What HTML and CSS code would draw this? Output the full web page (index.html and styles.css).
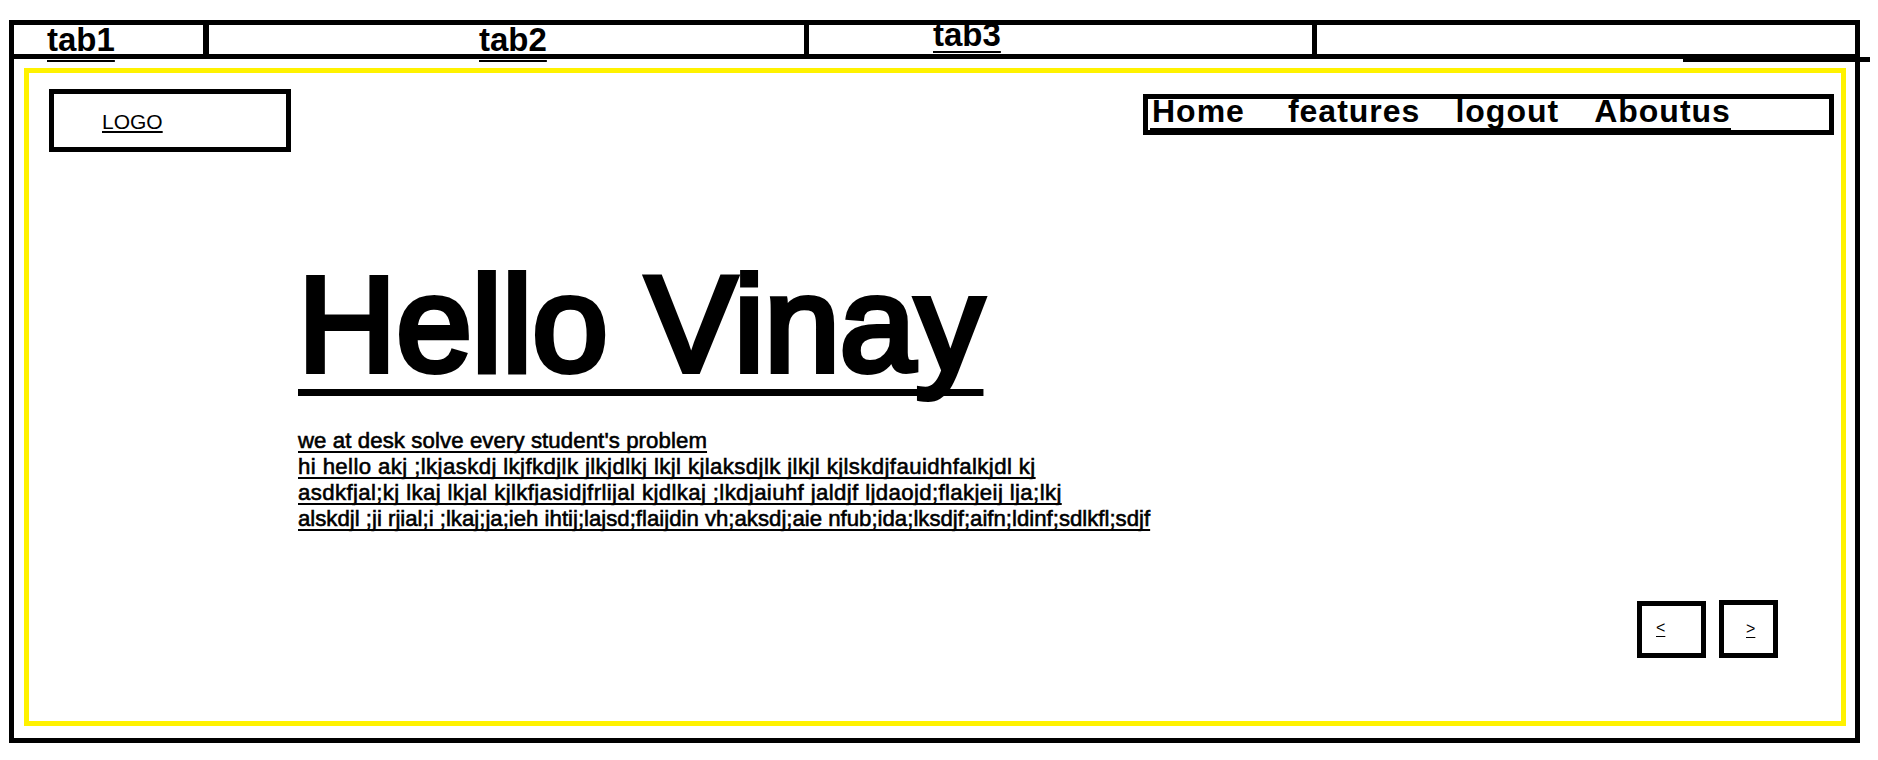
FILE: index.html
```html
<!DOCTYPE html>
<html lang="en">
<head>
<meta charset="utf-8">
<title>Wireframe</title>
<link rel="stylesheet" href="styles.css">
</head>
<body>
<div class="frame">
  <div class="tabs">
    <div class="tab tab-1"><span class="tab-label">tab1</span></div>
    <div class="tab tab-2"><span class="tab-label">tab2</span></div>
    <div class="tab tab-3"><span class="tab-label">tab3</span></div>
    <div class="tab tab-4"></div>
  </div>
  <div class="page">
    <header class="header">
      <div class="logo"><span class="logo-text">LOGO</span></div>
      <nav class="nav">
        <div class="nav-links">
          <span class="nav-home">Home</span>
          <span>features</span>
          <span>logout</span>
          <span>Aboutus</span>
        </div>
      </nav>
    </header>
    <section class="hero">
      <h1 class="title">Hello Vinay</h1>
      <p class="intro"><span class="line line-1">we at desk solve every student's problem</span><span class="line line-2">hi hello akj ;lkjaskdj lkjfkdjlk jlkjdlkj lkjl kjlaksdjlk jlkjl kjlskdjfauidhfalkjdl kj</span><span class="line line-3">asdkfjal;kj lkaj lkjal kjlkfjasidjfrlijal kjdlkaj ;lkdjaiuhf jaldjf ljdaojd;flakjeij lja;lkj</span><span class="line line-4">alskdjl ;ji rjial;i ;lkaj;ja;ieh ihtij;lajsd;flaijdin vh;aksdj;aie nfub;ida;lksdjf;aifn;ldinf;sdlkfl;sdjf</span></p>
    </section>
    <div class="pager">
      <div class="pager-btn pager-prev"><span class="pager-glyph">&lt;</span></div>
      <div class="pager-btn pager-next"><span class="pager-glyph">&gt;</span></div>
    </div>
  </div>
</div>
</body>
</html>
```
FILE: styles.css
```css
html, body {
  margin: 0;
  padding: 0;
  background: #ffffff;
}

body {
  font-family: "Liberation Sans", Arial, sans-serif;
  color: #000000;
}

.frame {
  box-sizing: border-box;
  width: 1851px;
  height: 723px;
  margin: 20px 0 0 9px;
  border: 5px solid #000000;
  display: flex;
  flex-direction: column;
}

/* ---------- tab strip ---------- */
.tabs {
  position: relative;
  display: flex;
  box-sizing: border-box;
  height: 34px;
  border-bottom: 5px solid #000000;
}

.tabs::after {
  content: "";
  position: absolute;
  left: 1669px;
  top: 32px;
  width: 187px;
  height: 5px;
  background: #000000;
}

.tab {
  box-sizing: border-box;
  height: 29px;
  font-size: 33px;
  font-weight: bold;
  line-height: 29px;
  white-space: nowrap;
}

.tab-label {
  display: block;
  width: max-content;
  text-decoration: underline;
  text-decoration-thickness: 2px;
  text-decoration-skip-ink: none;
  text-underline-offset: 9px;
}

.tab-1 {
  width: 195px;
  padding-left: 33px;
  border-right: 6px solid #000000;
}

.tab-2 {
  width: 600px;
  padding-left: 270px;
  border-right: 5px solid #000000;
}

.tab-3 {
  width: 508px;
  padding-left: 124px;
  border-right: 5px solid #000000;
}

.tab-3 .tab-label {
  margin-top: -5px;
  text-underline-offset: 5px;
}

.tab-4 {
  flex: 1;
}

/* ---------- yellow page ---------- */
.page {
  box-sizing: border-box;
  height: 658px;
  margin: 9px 9px 0 10px;
  border: 5px solid #fff200;
  display: flex;
  flex-direction: column;
}

.header {
  display: flex;
  justify-content: space-between;
  align-items: flex-start;
}

.logo {
  box-sizing: border-box;
  width: 242px;
  height: 63px;
  margin: 16px 0 0 20px;
  padding: 16px 0 0 48px;
  border: 5px solid #000000;
  font-size: 21px;
  line-height: 24px;
}

.logo-text {
  text-decoration: underline;
  text-underline-offset: 2px;
}

.nav {
  box-sizing: border-box;
  width: 691px;
  height: 41px;
  margin: 21px 7px 0 0;
  padding-left: 2px;
  border: 5px solid #000000;
}

.nav-links {
  display: inline-flex;
  gap: 35px;
  padding: 0 0 5px 2px;
  border-bottom: 2px solid #000000;
  font-size: 32px;
  font-weight: bold;
  letter-spacing: 1px;
  line-height: 24px;
  white-space: nowrap;
}

.nav-home {
  margin-right: 8px;
}

/* ---------- hero ---------- */
.hero {
  margin: 104px 0 0 269px;
}

.title {
  margin: 0;
  font-size: 136px;
  font-weight: normal;
  line-height: 136px;
  -webkit-text-stroke: 6px #000000;
  text-decoration: underline;
  text-decoration-thickness: 7px;
  text-decoration-skip-ink: none;
  text-underline-offset: 18px;
  white-space: nowrap;
}

.intro {
  margin: 36px 0 0 0;
  font-size: 22.2px;
  font-weight: normal;
  line-height: 26px;
  -webkit-text-stroke: 0.6px #000000;
  white-space: nowrap;
}

.line {
  display: block;
  width: max-content;
  text-decoration: underline;
  text-decoration-thickness: 2px;
  text-decoration-skip-ink: none;
  text-underline-offset: 3px;
}

.line-1 {
  letter-spacing: 0.1px;
}

.line-2 {
  letter-spacing: 0.4px;
}

.line-3 {
  letter-spacing: 0.38px;
}

/* ---------- pager ---------- */
.pager {
  margin-top: auto;
  margin-right: 63px;
  margin-bottom: 63px;
  display: flex;
  justify-content: flex-end;
  align-items: flex-end;
  gap: 13px;
}

.pager-btn {
  box-sizing: border-box;
  border: 5px solid #000000;
  font-size: 16px;
  line-height: 20px;
}

.pager-prev {
  width: 69px;
  height: 57px;
  padding: 12px 0 0 14px;
}

.pager-next {
  width: 59px;
  height: 58px;
  padding: 14px 0 0 22px;
}

.pager-glyph {
  text-decoration: underline;
  text-underline-offset: 3px;
}
```
